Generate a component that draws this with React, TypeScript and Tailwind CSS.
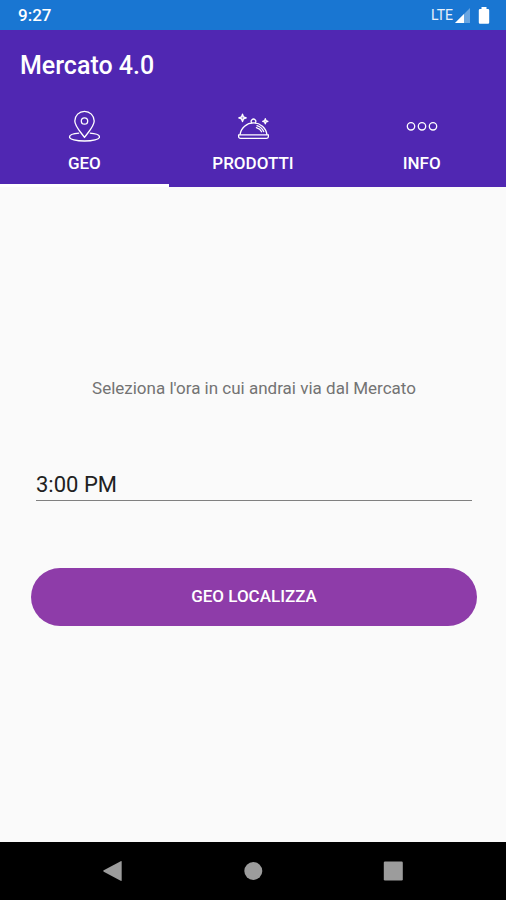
import { useState } from "react";
import clsx from "clsx";

function PinIcon() {
  return (
    <svg width="32" height="32" viewBox="0 0 32 32" fill="none" stroke="currentColor" strokeWidth="1.3" strokeLinejoin="round" aria-hidden="true">
      <path d="M16.500 27.500C14 23.600 6.800 16.600 6.800 11a9.700 9.700 0 0 1 19.400 0C26.200 16.600 19 23.600 16.500 27.500Z" />
      <circle cx="16.500" cy="11" r="3.200" />
      <path d="M11.200 23.200C5.500 23.600 1.500 25 1.500 26.900c0 2.300 6.700 4.100 15 4.100s15-1.800 15-4.100c0-1.900-4-3.300-9.700-3.700" />
    </svg>
  );
}

function DishIcon() {
  return (
    <svg width="32" height="32" viewBox="0 0 32 32" fill="none" stroke="currentColor" strokeWidth="1.3" strokeLinecap="round" strokeLinejoin="round" aria-hidden="true">
      <path d="M3.100 24.400c.9-6.700 6.600-11.500 13.400-11.500s12.500 4.800 13.400 11.500" />
      <path d="M1.600 24.900h29.800v1.500c0 1.200-.8 1.900-2 1.900H3.600c-1.200 0-2-.7-2-1.900Z" />
      <path d="M14.600 12.700a2.300 2.300 0 1 1 3.800 0" />
      <path d="M20 15.600c3.600 1.100 5.600 3.300 6.700 6M19.400 17.700c2.700.9 4.400 2.300 5.200 4" />
      <path fill="currentColor" fillOpacity="0.500" d="M5.500 4.200 6.500 6.900 9.200 7.900 6.500 8.900 5.500 11.600 4.500 8.900 1.800 7.900 4.500 6.900Z" />
      <path fill="currentColor" fillOpacity="0.500" d="M28.300 8.700 29 10.600 30.900 11.300 29 12 28.300 13.900 27.600 12 25.700 11.300 27.600 10.600Z" />
    </svg>
  );
}

function DotsIcon() {
  return (
    <svg width="32" height="32" viewBox="0 0 32 32" fill="none" stroke="currentColor" strokeWidth="1.300" aria-hidden="true">
      <circle cx="5" cy="16.300" r="3.700" />
      <circle cx="16" cy="16.300" r="3.700" />
      <circle cx="27" cy="16.300" r="3.700" />
    </svg>
  );
}

const tabs = [
  { id: "geo", label: "GEO", Icon: PinIcon },
  { id: "prodotti", label: "PRODOTTI", Icon: DishIcon },
  { id: "info", label: "INFO", Icon: DotsIcon },
];

function StatusBar() {
  return (
    <div className="flex h-[30px] items-center justify-between bg-[#1976d2] pr-4 pl-[18px] text-white">
      <span className="text-[17px] leading-5 font-medium">9:27</span>
      <div className="flex items-center">
        <span className="text-sm leading-5 text-white/90">LTE</span>
        <svg className="ml-0.5" width="15" height="15" viewBox="0 0 15 15" fill="currentColor" aria-hidden="true">
          <path d="M0 15 15 0v15Z" opacity="0.350" />
          <path d="M0 15 9 6v9Z" />
        </svg>
        <svg className="ml-2" width="12" height="17" viewBox="0 0 12 17" fill="currentColor" aria-hidden="true">
          <path d="M3.500 0h5v2H10a1.200 1.200 0 0 1 1.200 1.200v12.300a1.200 1.200 0 0 1-1.200 1.200H2a1.200 1.200 0 0 1-1.200-1.200V3.200A1.200 1.200 0 0 1 2 2h1.500Z" />
        </svg>
      </div>
    </div>
  );
}

function NavigationBar() {
  return (
    <nav className="flex h-[58px] items-center justify-center gap-[120px] bg-black text-[#9c9c9c]">
      <button type="button" aria-label="Indietro">
        <svg width="20" height="20" viewBox="0 0 20 20" fill="currentColor">
          <path d="M.8 9.300 17.700.2q1-.5 1 .6v18.400q0 1.100-1 .6L.8 10.700q-1.200-.7 0-1.400Z" />
        </svg>
      </button>
      <button type="button" aria-label="Home">
        <svg width="20" height="20" viewBox="0 0 20 20" fill="currentColor">
          <circle cx="10.300" cy="10" r="9" />
        </svg>
      </button>
      <button type="button" aria-label="Recenti">
        <svg width="20" height="20" viewBox="0 0 20 20" fill="currentColor">
          <rect x="0.800" y="0.500" width="19" height="19" rx="1.200" />
        </svg>
      </button>
    </nav>
  );
}

export default function App() {
  const [activeTab, setActiveTab] = useState("geo");
  const [time, setTime] = useState("3:00 PM");

  return (
    <div className="flex min-h-screen flex-col bg-[#fafafa] font-['Roboto',sans-serif]">
      <StatusBar />

      <header className="bg-[#5027b2] text-white">
        <h1 className="px-5 pt-5 text-[25px] leading-8 font-medium">Mercato 4.0</h1>
        <div role="tablist" className="mt-7 grid grid-cols-3">
          {tabs.map(({ id, label, Icon }) => (
            <button
              key={id}
              type="button"
              role="tab"
              aria-selected={activeTab === id}
              onClick={() => setActiveTab(id)}
              className={clsx(
                "flex flex-col items-center border-b-[3px] pb-[11px]",
                activeTab === id ? "border-white" : "border-transparent"
              )}
            >
              <Icon />
              <span className="mt-[11px] text-[17px] leading-5 font-medium">{label}</span>
            </button>
          ))}
        </div>
      </header>

      <main className="flex flex-1 flex-col pt-[189px] pr-[29px] pl-[31px]">
        <label htmlFor="time" className="text-center text-[17px] leading-6 text-[#737373]">
          Seleziona l'ora in cui andrai via dal Mercato
        </label>
        <input
          id="time"
          type="text"
          value={time}
          onChange={(e) => setTime(e.target.value)}
          className="mx-[5px] mt-[68px] h-[33px] border-b border-[#808080] bg-transparent text-[22px] text-[#212121] outline-none"
        />
        <button
          type="button"
          className="mt-[67px] h-[58px] rounded-full bg-[#8e3ca9] text-[17px] font-medium text-white"
        >
          GEO LOCALIZZA
        </button>
      </main>

      <NavigationBar />
    </div>
  );
}
